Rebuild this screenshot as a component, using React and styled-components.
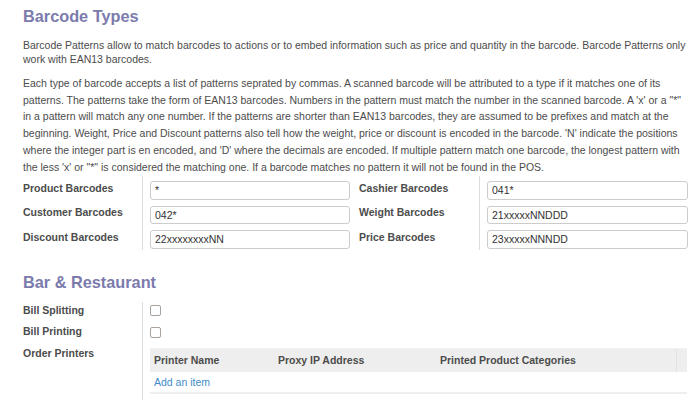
import React from "react";
import styled, { createGlobalStyle } from "styled-components";

const GlobalStyle = createGlobalStyle`
  body {
    margin: 0;
    background: #fff;
    font-family: "Liberation Sans", Arial, sans-serif;
    font-size: 10.5px;
    color: #4c4c4c;
  }
`;

const Page = styled.div`
  padding: 4px 12px 0 23px;
  width: 700px;
  height: 400px;
  box-sizing: border-box;
  overflow: hidden;
`;

const Heading = styled.h2`
  margin: 0;
  font-size: 16.3px;
  font-weight: bold;
  color: #7c7bad;
  line-height: 24px;
`;

const Help = styled.p`
  margin: ${(p) => p.$margin || "0"};
  line-height: ${(p) => p.$lh || "14px"};
  white-space: nowrap;
`;

const FieldGroups = styled.div`
  display: flex;
  gap: 9px;
  margin-top: 1px;
`;

const Group = styled.div`
  display: grid;
  grid-template-columns: ${(p) => p.$label}px 1fr;
  flex: ${(p) => p.$flex};
`;

const Label = styled.div`
  font-weight: bold;
  border-right: 1px solid #ddd;
  height: ${(p) => p.$h || 24.5}px;
  box-sizing: border-box;
  padding-top: ${(p) => p.$pt ?? 5.5}px;
`;

const Field = styled.div`
  padding: ${(p) => p.$pt ?? 5}px 0 0 7px;
  height: ${(p) => p.$h || 24.5}px;
  box-sizing: border-box;
`;

const Input = styled.input`
  display: block;
  width: 100%;
  height: 18.5px;
  box-sizing: border-box;
  border: 1px solid #ccc;
  border-radius: 3px;
  padding: 0 4px;
  font-family: inherit;
  font-size: 10.5px;
  color: #333;
`;

const Check = styled.span`
  display: block;
  width: 9px;
  height: 9px;
  border: 1px solid #aaa29d;
  border-radius: 2px;
`;

const SectionHead = styled(Heading)`
  margin-top: 20px;
`;

const BarGroup = styled.div`
  display: grid;
  grid-template-columns: 120px 1fr;
  margin-top: 8px;
`;

const Table = styled.div`
  width: 537px;
`;

const HeadRow = styled.div`
  display: grid;
  grid-template-columns: 124px 162px 1fr 11px;
  background: #eee;
  border-top: 1px solid #f2f2f2;
  height: 24px;
  box-sizing: border-box;
  font-weight: bold;
`;

const HeadCell = styled.div`
  display: flex;
  align-items: center;
  padding-left: ${(p) => (p.$sep ? 0 : 4)}px;
  border-left: ${(p) => (p.$sep ? "1px solid #e2e2e2" : "none")};
`;

const BodyRow = styled.div`
  height: 22px;
  box-sizing: border-box;
  border-bottom: 2px solid #eee;
  padding-left: 4px;
  display: flex;
  align-items: center;
`;

const AddLink = styled.a`
  color: #428bca;
  text-decoration: none;
`;

const left = [
  ["Product Barcodes", "*"],
  ["Customer Barcodes", "042*"],
  ["Discount Barcodes", "22xxxxxxxxNN"],
];
const right = [
  ["Cashier Barcodes", "041*"],
  ["Weight Barcodes", "21xxxxxNNDDD"],
  ["Price Barcodes", "23xxxxxNNNDD"],
];

const renderRows = (rows) =>
  rows.map(([label, value]) => (
    <React.Fragment key={label}>
      <Label>{label}</Label>
      <Field>
        <Input defaultValue={value} />
      </Field>
    </React.Fragment>
  ));

export default function App() {
  return (
    <>
      <GlobalStyle />
      <Page>
        <Heading>Barcode Types</Heading>
        <Help $margin="10px 0 0">
          Barcode Patterns allow to match barcodes to actions or to embed information such as price and quantity in the
          barcode. Barcode Patterns only
          <br />
          work with EAN13 barcodes.
        </Help>
        <Help $margin="9px 0 0" $lh="16.7px">
          Each type of barcode accepts a list of patterns seprated by commas. A scanned barcode will be attributed to a
          type if it matches one of its
          <br />
          patterns. The patterns take the form of EAN13 barcodes. Numbers in the pattern must match the number in the
          scanned barcode. A 'x' or a "*"
          <br />
          in a pattern will match any one number. If the patterns are shorter than EAN13 barcodes, they are assumed to be
          prefixes and match at the
          <br />
          beginning. Weight, Price and Discount patterns also tell how the weight, price or discount is encoded in the
          barcode. 'N' indicate the positions
          <br />
          where the integer part is en encoded, and 'D' where the decimals are encoded. If multiple pattern match one
          barcode, the longest pattern with
          <br />
          the less 'x' or "*" is considered the matching one. If a barcode matches no pattern it will not be found in the
          POS.
        </Help>
        <FieldGroups>
          <Group $label={120} $flex="0 0 327px">{renderRows(left)}</Group>
          <Group $label={121} $flex="1">{renderRows(right)}</Group>
        </FieldGroups>

        <SectionHead>Bar &amp; Restaurant</SectionHead>
        <BarGroup>
          <Label $h={21} $pt={2}>Bill Splitting</Label>
          <Field $h={21} $pt={3}>
            <Check />
          </Field>
          <Label $h={21} $pt={2}>Bill Printing</Label>
          <Field $h={21} $pt={4}>
            <Check />
          </Field>
          <Label $h={60} $pt={3}>Order Printers</Label>
          <Field $h={60} $pt={4}>
            <Table>
              <HeadRow>
                <HeadCell>Printer Name</HeadCell>
                <HeadCell>Proxy IP Address</HeadCell>
                <HeadCell>Printed Product Categories</HeadCell>
                <HeadCell $sep />
              </HeadRow>
              <BodyRow>
                <AddLink href="#">Add an item</AddLink>
              </BodyRow>
            </Table>
          </Field>
        </BarGroup>
      </Page>
    </>
  );
}
